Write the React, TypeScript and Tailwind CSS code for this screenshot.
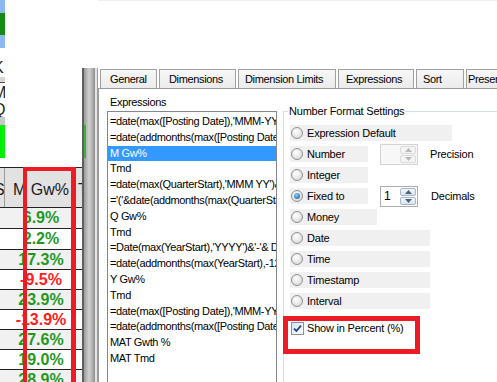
import clsx from "clsx";

const cn = clsx;

const listItems = [
  "=date(max([Posting Date]),'MMM-YY')",
  "=date(addmonths(max([Posting Date]),-12),'MMM-YY')",
  "M Gw%",
  "Tmd",
  "=date(max(QuarterStart),'MMM YY')&' - '",
  "='('&date(addmonths(max(QuarterStart),-12),'MMM YY')",
  "Q Gw%",
  "Tmd",
  "=Date(max(YearStart),'YYYY')&'-'& Date(max(YearEnd),'YY')",
  "=date(addmonths(max(YearStart),-12),'YYYY')",
  "Y Gw%",
  "Tmd",
  "=date(max([Posting Date]),'MMM-YY')",
  "=date(addmonths(max([Posting Date]),-12),'MMM-YY')",
  "MAT Gwth %",
  "MAT Tmd",
];

const values = [
  { v: "6.9%", up: true },
  { v: "2.2%", up: true },
  { v: "17.3%", up: true },
  { v: "-9.5%", up: false },
  { v: "23.9%", up: true },
  { v: "-13.9%", up: false },
  { v: "27.6%", up: true },
  { v: "19.0%", up: true },
  { v: "28.9%", up: true },
];

const tabs = [
  { label: "General", w: "w-[57px]", pl: "pl-[9px]" },
  { label: "Dimensions", w: "w-[77px]", pl: "pl-[9px]" },
  { label: "Dimension Limits", w: "w-[98px]", pl: "pl-[6px]" },
  { label: "Expressions", w: "w-[76px]", pl: "pl-[7px]" },
  { label: "Sort", w: "w-[48px]", pl: "pl-[6px]" },
  { label: "Presentation", w: "w-[70px]", pl: "pl-[1px]" },
];

function CutLetter({ ch, h }: { ch: string; h: string }) {
  return (
    <div className={cn("shrink-0 overflow-hidden", h)}>
      <span className="-ml-[7px] block text-[16px] leading-[19px] text-[#222]">{ch}</span>
    </div>
  );
}

function TableStrip() {
  return (
    <div className="relative flex w-[82px] shrink-0 flex-col">
      {/* remains of the chart / list box on the far left */}
      <div className="flex h-[167px] shrink-0">
        <div className="flex w-[5px] flex-col overflow-hidden">
          <div className="h-[48px] shrink-0 bg-[#8cbaf0] pt-[13px]">
            <div className="h-[22px] bg-[#148c14]" />
          </div>
          <div className="h-[10px] shrink-0" />
          <CutLetter ch="K" h="h-[19px]" />
          <div className="h-[6px] shrink-0 border-b border-[#505050] bg-[#d6d6d6]" />
          <CutLetter ch="M" h="h-[17px]" />
          <CutLetter ch="Q" h="h-[17px]" />
          <div className="h-[8px] shrink-0 bg-[#c8c8c8]" />
          <div className="h-[33px] shrink-0 bg-[#00ee00]" />
        </div>
      </div>

      {/* header */}
      <div className="flex h-[41px] shrink-0 border-y border-[#222] bg-[#e2e2e2] text-[16px] text-[#1a1a1a]">
        <div className="w-[5px] overflow-hidden border-r border-[#9a9a9a] pt-[13px]">
          <span className="-ml-[6px] block leading-[18px]">S</span>
        </div>
        <div className="flex-1 pt-[13px] text-center leading-[18px]">M Gw%</div>
        <div className="w-[5px] overflow-hidden pl-[1px] pt-[13px] leading-[18px]">T</div>
      </div>

      {values.map((r, i) => (
        <div
          key={i}
          className={cn(
            "flex shrink-0 border-b border-[#222]",
            i < 2 ? "h-[21px]" : "h-[20px]",
            i % 2 === 0 ? "bg-[#f1f1f1]" : "bg-white"
          )}
        >
          <div className="w-[5px]" />
          <div
            className={cn(
              "flex-1 text-center text-[16px] font-bold leading-[20px]",
              r.up ? "text-[#1f991f]" : "text-[#ff2020]"
            )}
          >
            {r.v}
          </div>
          <div className="w-[5px]" />
        </div>
      ))}

      {/* red highlight around the column */}
      <div className="absolute left-[23px] top-[167px] h-[240px] w-[53px] border-[4px] border-r-[5px] border-[#ed1c24]" />
    </div>
  );
}

function Splitter() {
  return (
    <div className="flex w-[16px] shrink-0 flex-col">
      <div className="h-[68px] shrink-0" />
      <div className="relative flex-1 bg-[linear-gradient(to_right,#5f5f5f_0px,#5f5f5f_2px,#9a9a9a_2px,#d0d0d0_7px,#b4b4b4_10px,#8e8e8e_13px,#e4e4e4_13px,#e4e4e4_15px,#9c9c9c_15px)]">
        <div className="absolute left-[2px] top-[57px] h-[33px] w-[2px] bg-[#3fb03f]" />
      </div>
    </div>
  );
}

function Radio({ checked }: { checked?: boolean }) {
  return (
    <span className="flex h-[12px] w-[12px] shrink-0 items-center justify-center rounded-full border border-[#8e8f8f] bg-[radial-gradient(circle_at_40%_35%,#ffffff,#d2d2d2)]">
      {checked && (
        <span className="h-[6px] w-[6px] rounded-full bg-[radial-gradient(circle_at_40%_35%,#8fd0ff,#0b4f9c)]" />
      )}
    </span>
  );
}

function SpinButton({ up, disabled }: { up?: boolean; disabled?: boolean }) {
  return (
    <div
      className={cn(
        "flex flex-1 items-center justify-center rounded-[2px] border",
        disabled
          ? "border-[#dadada] bg-[#f4f4f4]"
          : "border-[#a9b6c6] bg-[linear-gradient(#f4f8fc,#d9e4f0)]"
      )}
    >
      <svg width="7" height="4" viewBox="0 0 7 4">
        <path
          d={up ? "M0 4 L3.5 0 L7 4Z" : "M0 0 L3.5 4 L7 0Z"}
          fill={disabled ? "#b8b8b8" : "#4d6185"}
        />
      </svg>
    </div>
  );
}

function Spinner({ value, disabled }: { value?: string; disabled?: boolean }) {
  return (
    <div
      className={cn(
        "ml-[12px] flex h-[21px] w-[38px] shrink-0 border",
        disabled ? "border-[#d4d4d4] bg-[#f7f7f7]" : "border-[#abadb3] bg-white"
      )}
    >
      <div className="flex-1 pl-[3px] text-[12px] leading-[19px]">{value}</div>
      <div className="flex w-[17px] flex-col gap-[1px] py-[1px] pr-[1px]">
        <SpinButton up disabled={disabled} />
        <SpinButton disabled={disabled} />
      </div>
    </div>
  );
}

function RadioRow({
  label,
  width,
  checked,
  children,
}: {
  label: string;
  width: string;
  checked?: boolean;
  children?: React.ReactNode;
}) {
  return (
    <div className="flex h-[16px] items-center">
      <div className={cn("flex h-full shrink-0 items-center gap-[4px] bg-[#f0f0f0] pl-[1px]", width)}>
        <Radio checked={checked} />
        <span className="whitespace-nowrap leading-[13px]">{label}</span>
      </div>
      {children}
    </div>
  );
}

function Dialog() {
  return (
    <div className="flex min-w-0 flex-1 flex-col text-[11px]">
      <div className="h-[68px] shrink-0 border-t border-[#eeeeee]" />
      <div className="flex h-[20px] shrink-0 items-end gap-[2px] overflow-hidden pl-[2px] tracking-[-0.35px]">
        {tabs.map((t) => (
          <div
            key={t.label}
            className={cn(
              "h-[19px] shrink-0 whitespace-nowrap border border-b-0 border-[#a0a0a0] bg-[linear-gradient(#f7f7f7,#ebebeb)] leading-[18px]",
              t.w,
              t.pl
            )}
          >
            {t.label}
          </div>
        ))}
      </div>

      <div className="flex min-h-0 flex-1 overflow-hidden border-l border-t border-[#9a9a9a] bg-white">
        {/* expressions list */}
        <div className="flex w-[178px] shrink-0 flex-col pl-[8px] pt-[7px]">
          <div className="ml-[3px] leading-[13px] tracking-[-0.35px]">Expressions</div>
          <div className="mt-[2px] h-[300px] w-[170px] shrink-0 overflow-hidden border border-[#828790] pt-[2px] tracking-[-0.35px]">
            {listItems.map((it, i) => (
              <div
                key={i}
                className={cn(
                  "h-[15.8px] overflow-hidden whitespace-nowrap pl-[2px] leading-[15.8px]",
                  i === 2 ? "bg-[#3399ff] text-white" : "text-black"
                )}
              >
                {it}
              </div>
            ))}
          </div>
        </div>

        {/* number format settings */}
        <fieldset className="ml-[6px] mt-[16px] min-w-0 flex-1 border border-b-0 border-r-0 border-[#d5dfe5] pl-[6px] pt-[7px] tracking-[-0.2px]">
          <legend className="-ml-[2px] px-[1px] leading-[13px]">Number Format Settings</legend>
          <div className="flex flex-col gap-[5px]">
            <RadioRow label="Expression Default" width="w-[162px]" />
            <RadioRow label="Number" width="w-[78px]">
              <Spinner disabled />
              <span className="ml-[12px] whitespace-nowrap">Precision</span>
            </RadioRow>
            <RadioRow label="Integer" width="w-[78px]" />
            <RadioRow label="Fixed to" width="w-[78px]" checked>
              <Spinner value="1" />
              <span className="ml-[13px] whitespace-nowrap">Decimals</span>
            </RadioRow>
            <RadioRow label="Money" width="w-[87px]" />
            <RadioRow label="Date" width="w-[140px]" />
            <RadioRow label="Time" width="w-[140px]" />
            <RadioRow label="Timestamp" width="w-[140px]" />
            <RadioRow label="Interval" width="w-[140px]" />
          </div>
          <div className="-ml-[7px] mt-[7px] h-[38px] w-[137px] border-[5px] border-[#ed1c24] pl-[3px] pt-[1px]">
            <div className="flex h-[13px] items-center gap-[3px]">
              <span className="flex h-[13px] w-[13px] shrink-0 items-center justify-center border border-[#8f8f8f] bg-[linear-gradient(135deg,#d6e2f3,#ffffff)]">
                <svg width="9" height="9" viewBox="0 0 9 9">
                  <path d="M1 4.6 L3.4 7 L8 1.6" stroke="#21409a" strokeWidth="1.8" fill="none" />
                </svg>
              </span>
              <span className="whitespace-nowrap leading-[13px]">Show in Percent (%)</span>
            </div>
          </div>
        </fieldset>
      </div>
    </div>
  );
}

export default function App() {
  return (
    <div className="flex h-[382px] w-[497px] overflow-hidden bg-white font-['Liberation_Sans',Arial,sans-serif] text-black">
      <TableStrip />
      <Splitter />
      <Dialog />
    </div>
  );
}
